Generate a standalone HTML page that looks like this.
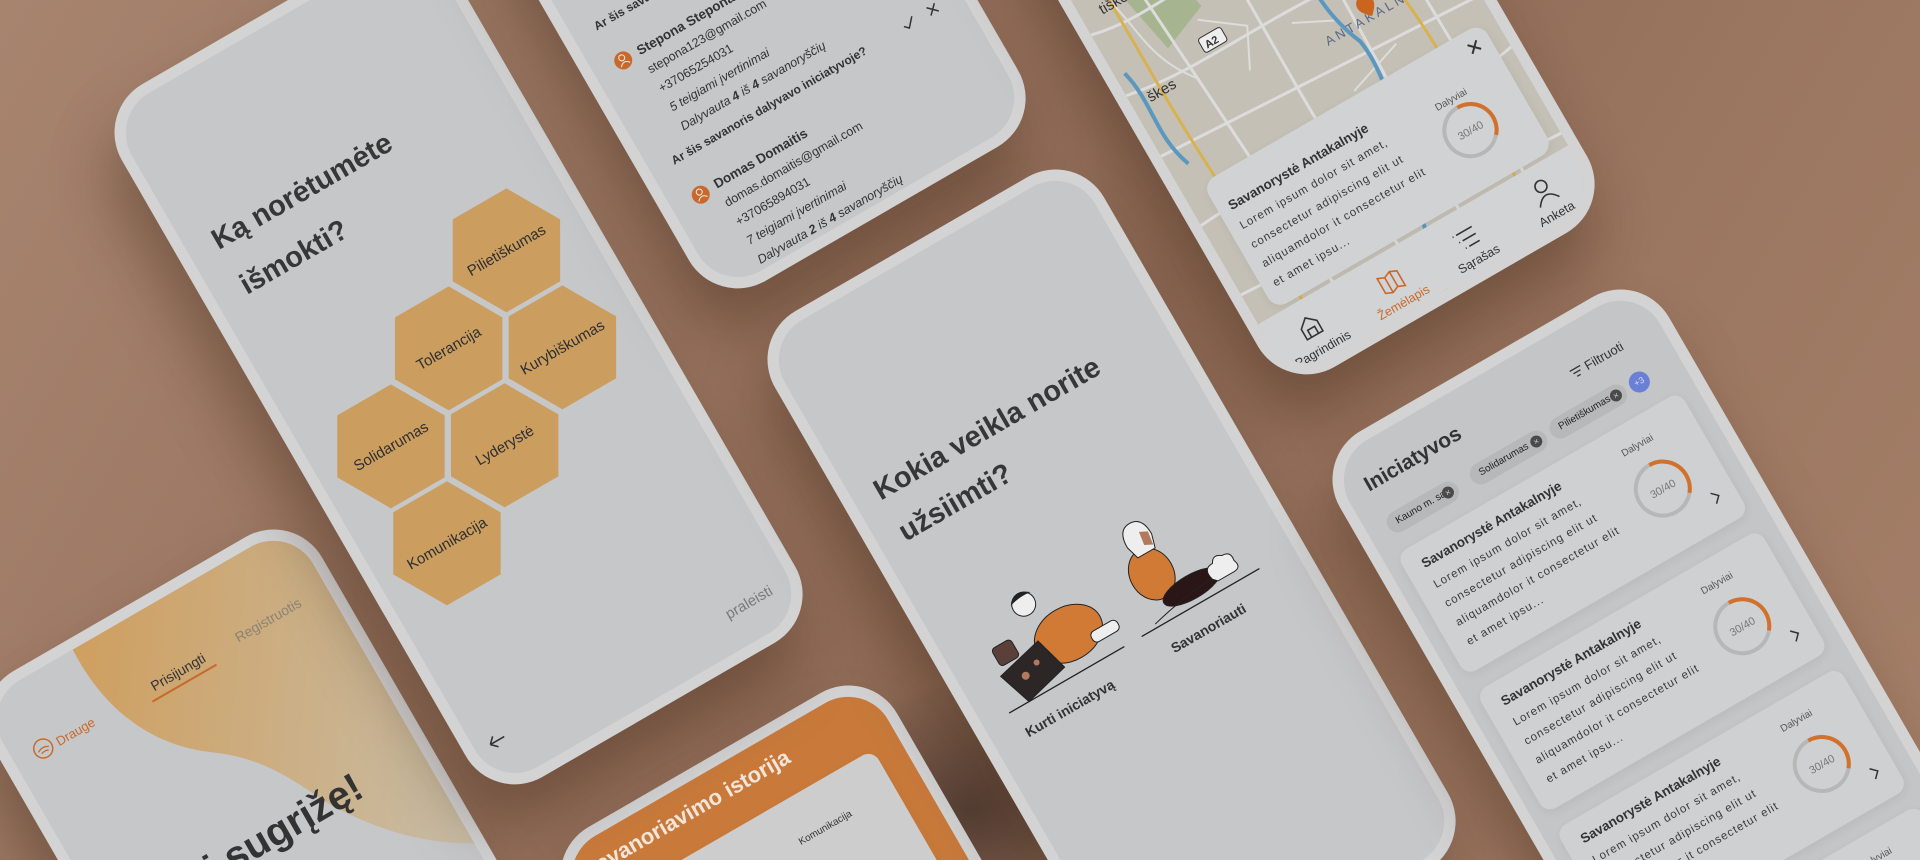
<!DOCTYPE html>
<html style="width:1920px;height:860px;overflow:hidden"><head><meta charset="utf-8">
<style>
*{box-sizing:border-box;margin:0;padding:0}
html,body{width:1920px;height:860px;overflow:hidden}
body{position:relative;font-family:"Liberation Sans",sans-serif;
background:linear-gradient(120deg,#a7846e 0%,#9a7662 30%,#8f6b57 55%,#9b7660 75%,#a57f68 100%);}
#wrap{position:absolute;left:0;top:0;width:1920px;height:860px;overflow:hidden}
.ph{position:absolute;width:380px;height:800px;transform-origin:0 0;transform:rotate(-30deg);border-radius:56px;background:#d3d3d4;box-shadow:-25px 35px 60px rgba(50,25,10,.35)}
.sc{position:absolute;left:11px;top:11px;right:11px;bottom:11px;border-radius:46px;background:#c6c7c9;overflow:hidden}
.a{position:absolute;white-space:nowrap;line-height:1}
.t{font-size:29px;font-weight:bold;color:#373737}
.c{transform:translate(-50%,-50%)}
.s13{font-size:13px;color:#353535}
.lor{font-size:11.5px;letter-spacing:1px;color:#3a3a3a}
.card{position:absolute;background:#cfd0d2;border-radius:12px;box-shadow:0 3px 10px rgba(0,0,0,.06)}
.chip{position:absolute;height:22px;border-radius:11px;background:#b7b8ba;font-size:10px;color:#222;line-height:22px;padding-left:10px}
.chip i{position:absolute;right:5px;top:5px;width:12px;height:12px;border-radius:50%;background:#4a4a4a;color:#ccc;font-size:9px;line-height:12px;text-align:center;font-style:normal}
</style></head><body><div id="wrap">

<div style="position:absolute;left:820px;top:680px;width:300px;height:260px;border-radius:50%;background:radial-gradient(closest-side,rgba(40,30,30,.55),rgba(40,30,30,0))"></div>

<!-- phone 7 history -->
<div class="ph" style="left:540px;top:855px"><div class="sc" style="background:#c97a3b">
<div class="a" style="left:19px;top:16px;font-size:22px;font-weight:bold;color:#f1e6dc">Savanoriavimo istorija</div>
<div class="card" style="left:10px;top:64px;width:320px;height:400px;background:#cdcdcd">
<div class="a s13" style="left:20px;top:40px;font-size:10px">Solidarumas</div>
<div class="a s13" style="left:210px;top:40px;font-size:10px">Komunikacija</div></div>
</div></div>

<!-- phone 6 login -->
<div class="ph" style="left:-35px;top:699px"><div class="sc">
<svg style="position:absolute;left:0;top:0" width="360" height="780"><defs><linearGradient id="g1" x1="0" y1="0" x2="1" y2="1"><stop offset="0" stop-color="#cf9f5f"/><stop offset="1" stop-color="#c8bea9"/></linearGradient></defs>
<path d="M107,0 C104,60 122,120 178,160 C222,192 236,232 252,262 C282,312 320,350 370,375 L370,0 Z" fill="url(#g1)"/></svg>
<svg style="position:absolute;left:21px;top:60px" width="22" height="22"><circle cx="11" cy="11" r="9.5" fill="none" stroke="#c8692b" stroke-width="1.5"/><path d="M5,12 q6,-4 12,0 M7,15 q4,-2 8,0" stroke="#c8692b" fill="none" stroke-width="1.2"/></svg>
<div class="a" style="left:47px;top:66px;font-size:13px;color:#c8692b">Drauge</div>
<div class="a c" style="left:187px;top:72px;font-size:14px;color:#333">Prisijungti</div>
<div class="a" style="left:150px;top:84px;width:74px;height:2px;background:#c8692b"></div>
<div class="a c" style="left:291px;top:72px;font-size:14px;color:#8c8272">Registruotis</div>
<div class="a" style="right:70px;top:240px;font-size:40px;font-weight:bold;color:#333">Sveiki sugrįžę!</div>
</div></div>

<!-- phone 1 hex -->
<div class="ph" style="left:94px;top:112px"><div class="sc">
<div class="a t" style="left:28px;top:148px">Ką norėtumėte</div>
<div class="a t" style="left:30px;top:201px">išmokti?</div>
<svg style="position:absolute;left:0;top:0" width="360" height="780" font-family="Liberation Sans" font-size="15" fill="#2e2e2e" text-anchor="middle">
<defs><polygon id="hx" points="-62,0 -31,-53.7 31,-53.7 62,0 31,53.7 -31,53.7" fill="#cb9e60"/></defs>
<use href="#hx" x="277" y="315"/><use href="#hx" x="178" y="371"/><use href="#hx" x="277" y="427"/>
<use href="#hx" x="79" y="427"/><use href="#hx" x="178" y="483"/><use href="#hx" x="79" y="539"/>
<text x="277" y="320">Pilietiškumas</text><text x="178" y="376">Tolerancija</text><text x="277" y="432">Kurybiškumas</text>
<text x="79" y="432">Solidarumas</text><text x="178" y="488">Lyderystė</text><text x="79" y="544">Komunikacija</text>
<path d="M16,735 h16 M16,735 l6,-6 M16,735 l6,6" stroke="#333" stroke-width="1.6" fill="none"/>
<text x="311" y="746" fill="#7a7a7a">praleisti</text>
</svg>
</div></div>

<!-- phone 3 volunteers -->
<div class="ph" style="left:317px;top:-384px"><div class="sc">
<svg style="position:absolute;left:0;top:0" width="360" height="780" font-family="Liberation Sans" font-size="12.5" fill="#333">
<text x="24" y="488" font-weight="bold" font-size="12">Ar šis savanoris dalyvavo iniciatyvoje?</text>
<circle cx="32" cy="527" r="9" fill="#c8692b"/><circle cx="32" cy="524" r="3" fill="none" stroke="#eee"/><path d="M27,532 q5,-6 10,0" stroke="#eee" fill="none"/>
<text x="49" y="531" font-weight="bold" font-size="13.5">Stepona Steponaitis</text>
<text x="49" y="552">stepona123@gmail.com</text>
<text x="49" y="574">+37065254031</text>
<text x="49" y="596" font-style="italic">5 teigiami įvertinimai</text>
<text x="49" y="618" font-style="italic">Dalyvauta <tspan font-weight="bold">4</tspan> iš <tspan font-weight="bold">4</tspan> savanoryščių</text>
<text x="24" y="643" font-weight="bold" font-size="12">Ar šis savanoris dalyvavo iniciatyvoje?</text>
<path d="M292,638 l4,4 l8,-9" stroke="#333" stroke-width="1.5" fill="none"/>
<path d="M321,633 l9,9 M330,633 l-9,9" stroke="#333" stroke-width="1.5"/>
<circle cx="32" cy="682" r="9" fill="#c8692b"/><circle cx="32" cy="679" r="3" fill="none" stroke="#eee"/><path d="M27,687 q5,-6 10,0" stroke="#eee" fill="none"/>
<text x="49" y="685" font-weight="bold" font-size="13.5">Domas Domaitis</text>
<text x="49" y="706">domas.domaitis@gmail.com</text>
<text x="49" y="728">+37065894031</text>
<text x="49" y="750" font-style="italic">7 teigiami įvertinimai</text>
<text x="49" y="772" font-style="italic">Dalyvauta <tspan font-weight="bold">2</tspan> iš <tspan font-weight="bold">4</tspan> savanoryščių</text>
</svg>
</div></div>

<!-- phone 4 map -->
<div class="ph" style="left:886px;top:-298px"><div class="sc" style="background:#c5c0b5">
<svg style="position:absolute;left:0;top:0" width="360" height="780" font-family="Liberation Sans">
<path d="M40,330 l60,20 l10,60 l-50,20 z M200,420 l50,-10 l20,40 l-40,20z M120,600 l40,-20 l30,30 l-40,20z M300,330 l60,0 l0,200 l-40,-10z" fill="#a6b58f"/>
<g stroke="#dcdcdc" stroke-width="3" fill="none">
<path d="M0,380 C80,400 150,360 360,410 M0,450 C100,470 200,440 360,480 M0,520 L360,540 M60,300 L90,780 M150,300 C160,450 140,600 170,780 M240,300 L230,780 M310,300 C300,500 320,600 300,780 M0,600 C120,590 250,620 360,600 M0,680 L360,700"/>
<path d="M20,330 C50,380 30,420 70,470 M100,420 l40,30 l-20,40 M180,470 l40,20 M260,380 l30,50 M200,560 l60,-20" stroke-width="2"/></g>
<g stroke="#d7b24e" stroke-width="3" fill="none"><path d="M30,300 C40,420 20,520 60,780"/><path d="M120,300 C180,380 230,430 280,460 C300,520 290,620 300,780"/></g>
<path d="M210,300 C230,400 200,450 230,520 C240,580 200,650 180,780" stroke="#5b98c0" stroke-width="4" fill="none"/>
<path d="M10,430 C20,470 5,500 20,540" stroke="#5b98c0" stroke-width="4" fill="none"/>
<text x="20" y="368" font-size="15" fill="#333">tiškės</text>
<text x="18" y="468" font-size="15" fill="#333">škes</text>
<rect x="90" y="437" width="26" height="16" rx="3" fill="#eee" stroke="#333"/><text x="94" y="450" font-size="11" font-weight="bold" fill="#333">A2</text>
<text x="200" y="508" font-size="13" letter-spacing="3" fill="#5a6888">ANTAKALNIS</text>
<text x="150" y="582" font-size="18" font-weight="bold" fill="#222">Vilnius</text>
<path d="M244,490 a9,9 0 1,1 18,0 q0,6 -9,14 q-9,-8 -9,-14z" fill="#c9651f"/>
</svg>
<div class="card" style="left:22px;top:564px;width:322px;height:146px;background:#d1d2d4;border-radius:14px">
<div class="a" style="left:12px;top:27px;font-size:13.5px;font-weight:bold;color:#333">Savanorystė Antakalnyje</div>
<div class="a lor" style="left:12px;top:52px">Lorem ipsum dolor sit amet,</div>
<div class="a lor" style="left:12px;top:74px">consectetur adipiscing elit ut</div>
<div class="a lor" style="left:12px;top:96px">aliquamdolor it consectetur elit</div>
<div class="a lor" style="left:12px;top:118px">et amet ipsu...</div>
<div class="a" style="left:240px;top:48px;font-size:10px;color:#555">Dalyviai</div>
<svg style="position:absolute;left:228px;top:57px" width="62" height="62"><circle cx="31" cy="31" r="26" fill="none" stroke="#b7b7b7" stroke-width="4"/><path d="M31,5 A26,26 0 0,1 51,48" fill="none" stroke="#d2712c" stroke-width="4"/><text x="31" y="35" font-size="11" fill="#777" text-anchor="middle" font-family="Liberation Sans">30/40</text></svg>
<svg style="position:absolute;left:296px;top:10px" width="16" height="16"><path d="M3,3 L13,13 M13,3 L3,13" stroke="#333" stroke-width="2"/></svg>
</div>
<div class="a" style="left:0;top:714px;width:360px;height:70px;background:#d2d3d5"></div>
<svg style="position:absolute;left:0;top:714px" width="360" height="70" font-family="Liberation Sans" font-size="12.5" text-anchor="middle">
<path d="M35,38 v-12 l9,-8 l9,8 v12 z M40,38 v-8 h8 v8" stroke="#333" stroke-width="1.6" fill="none"/>
<text x="44" y="58" fill="#333">Pagrindinis</text>
<path d="M126,20 l7,3 l7,-3 l7,3 v17 l-7,-3 l-7,3 l-7,-3 z M133,23 v17 M140,20 v17" stroke="#c8692b" stroke-width="1.6" fill="none"/>
<text x="137" y="58" fill="#c8692b">Žemėlapis</text>
<path d="M216,22 h18 M219,30 h15 M222,38 h12 M212,22 h1 M215,30 h1 M218,38 h1" stroke="#333" stroke-width="1.6"/>
<text x="224" y="58" fill="#333">Sąrašas</text>
<circle cx="314" cy="22" r="6" stroke="#333" stroke-width="1.6" fill="none"/><path d="M303,40 q11,-16 22,0" stroke="#333" stroke-width="1.6" fill="none"/>
<text x="314" y="58" fill="#333">Anketa</text>
</svg>
</div></div>

<!-- phone 2 kokia -->
<div class="ph" style="left:747px;top:339px"><div class="sc">
<div class="a t" style="left:24px;top:173px">Kokia veikla norite</div>
<div class="a t" style="left:25px;top:221px">užsiimti?</div>
<svg style="position:absolute;left:0;top:0" width="360" height="780" font-family="Liberation Sans">
<line x1="29" y1="444" x2="162" y2="444" stroke="#222" stroke-width="1.3"/>
<line x1="182" y1="444" x2="318" y2="444" stroke="#222" stroke-width="1.3"/>
<ellipse cx="120" cy="405" rx="36" ry="27" fill="#d07a36" stroke="#222"/>
<rect x="138" y="415" width="30" height="12" rx="5" fill="#eee" stroke="#222"/>
<circle cx="96" cy="357" r="12" fill="#eee" stroke="#222"/><path d="M84,352 q10,-14 24,-2 q-12,-2 -24,2z" fill="#222"/>
<polygon points="40,408 90,396 100,432 52,444" fill="#2c2626" stroke="#222"/>
<circle cx="62" cy="420" r="4" fill="#b27a5c"/><circle cx="78" cy="414" r="3" fill="#b27a5c"/>
<rect x="45" y="380" width="22" height="20" rx="4" fill="#5a4038" stroke="#222"/>
<ellipse cx="222" cy="395" rx="22" ry="27" fill="#d07a36" stroke="#222"/>
<ellipse cx="250" cy="426" rx="32" ry="12" fill="#2a1517" stroke="#222"/>
<path d="M200,440 q40,-10 80,-12" stroke="#222" fill="none"/>
<path d="M214,360 q0,-20 14,-20 q14,0 14,20 l-4,14 h-20z" fill="#eee" stroke="#222"/><path d="M232,352 l8,4 l-2,14 l-8,-4z" fill="#b27a5c"/>
<path d="M272,430 q-4,-14 8,-14 q4,-8 12,-2 q10,0 8,10 q4,10 -6,10 h-18z" fill="#eee" stroke="#222"/>
<text x="84" y="475" font-size="14" font-weight="bold" fill="#333" text-anchor="middle">Kurti iniciatyvą</text>
<text x="244" y="475" font-size="14" font-weight="bold" fill="#333" text-anchor="middle">Savanoriauti</text>
</svg>
</div></div>

<!-- phone 5 iniciatyvos -->
<div class="ph" style="left:1312px;top:459px"><div class="sc" style="background:#c4c5c7">
<div class="a" style="left:22px;top:29px;font-size:21px;font-weight:bold;color:#333">Iniciatyvos</div>
<svg style="position:absolute;left:255px;top:40px" width="14" height="12"><path d="M1,2 h12 M3,6 h8 M5,10 h4" stroke="#333" stroke-width="1.3"/></svg>
<div class="a" style="left:272px;top:39px;font-size:13px;color:#333">Filtruoti</div>
<div class="chip" style="left:21px;top:75px;width:80px">Kauno m. sav<i>×</i></div>
<div class="chip" style="left:117px;top:75px;width:86px">Solidarumas<i>×</i></div>
<div class="chip" style="left:209px;top:75px;width:86px">Pilietiškumas<i>×</i></div>
<div class="a c" style="left:311px;top:86px;width:21px;height:21px;border-radius:50%;background:#6a7fd6;color:#dde;font-size:9px;line-height:21px;text-align:center">+3</div>
<div id="cards"></div>
</div></div>

</div>
<script>
var h='';for(var i=0;i<4;i++){var t=114+i*159;
h+='<div class="card" style="left:14px;top:'+t+'px;width:327px;height:140px">'+
'<div class="a" style="left:18px;top:15px;font-size:13.5px;font-weight:bold;color:#333">Savanorystė Antakalnyje</div>'+
'<div class="a lor" style="left:18px;top:41px">Lorem ipsum dolor sit amet,</div>'+
'<div class="a lor" style="left:18px;top:63px">consectetur adipiscing elit ut</div>'+
'<div class="a lor" style="left:18px;top:85px">aliquamdolor it consectetur elit</div>'+
'<div class="a lor" style="left:18px;top:107px">et amet ipsu...</div>'+
'<div class="a" style="left:246px;top:22px;font-size:10px;color:#555">Dalyviai</div>'+
'<svg style="position:absolute;left:233px;top:45px" width="62" height="62"><circle cx="31" cy="31" r="27" fill="none" stroke="#b7b7b7" stroke-width="4"/><path d="M31,4 A27,27 0 0,1 52,48" fill="none" stroke="#d2712c" stroke-width="4"/><text x="31" y="35" font-size="11" fill="#777" text-anchor="middle" font-family="Liberation Sans">30/40</text></svg>'+
'<svg style="position:absolute;left:300px;top:102px" width="12" height="16"><path d="M3,2 l6,6 l-6,6" stroke="#333" stroke-width="1.5" fill="none"/></svg></div>';}
document.getElementById('cards').innerHTML=h;
</script>
</body></html>
